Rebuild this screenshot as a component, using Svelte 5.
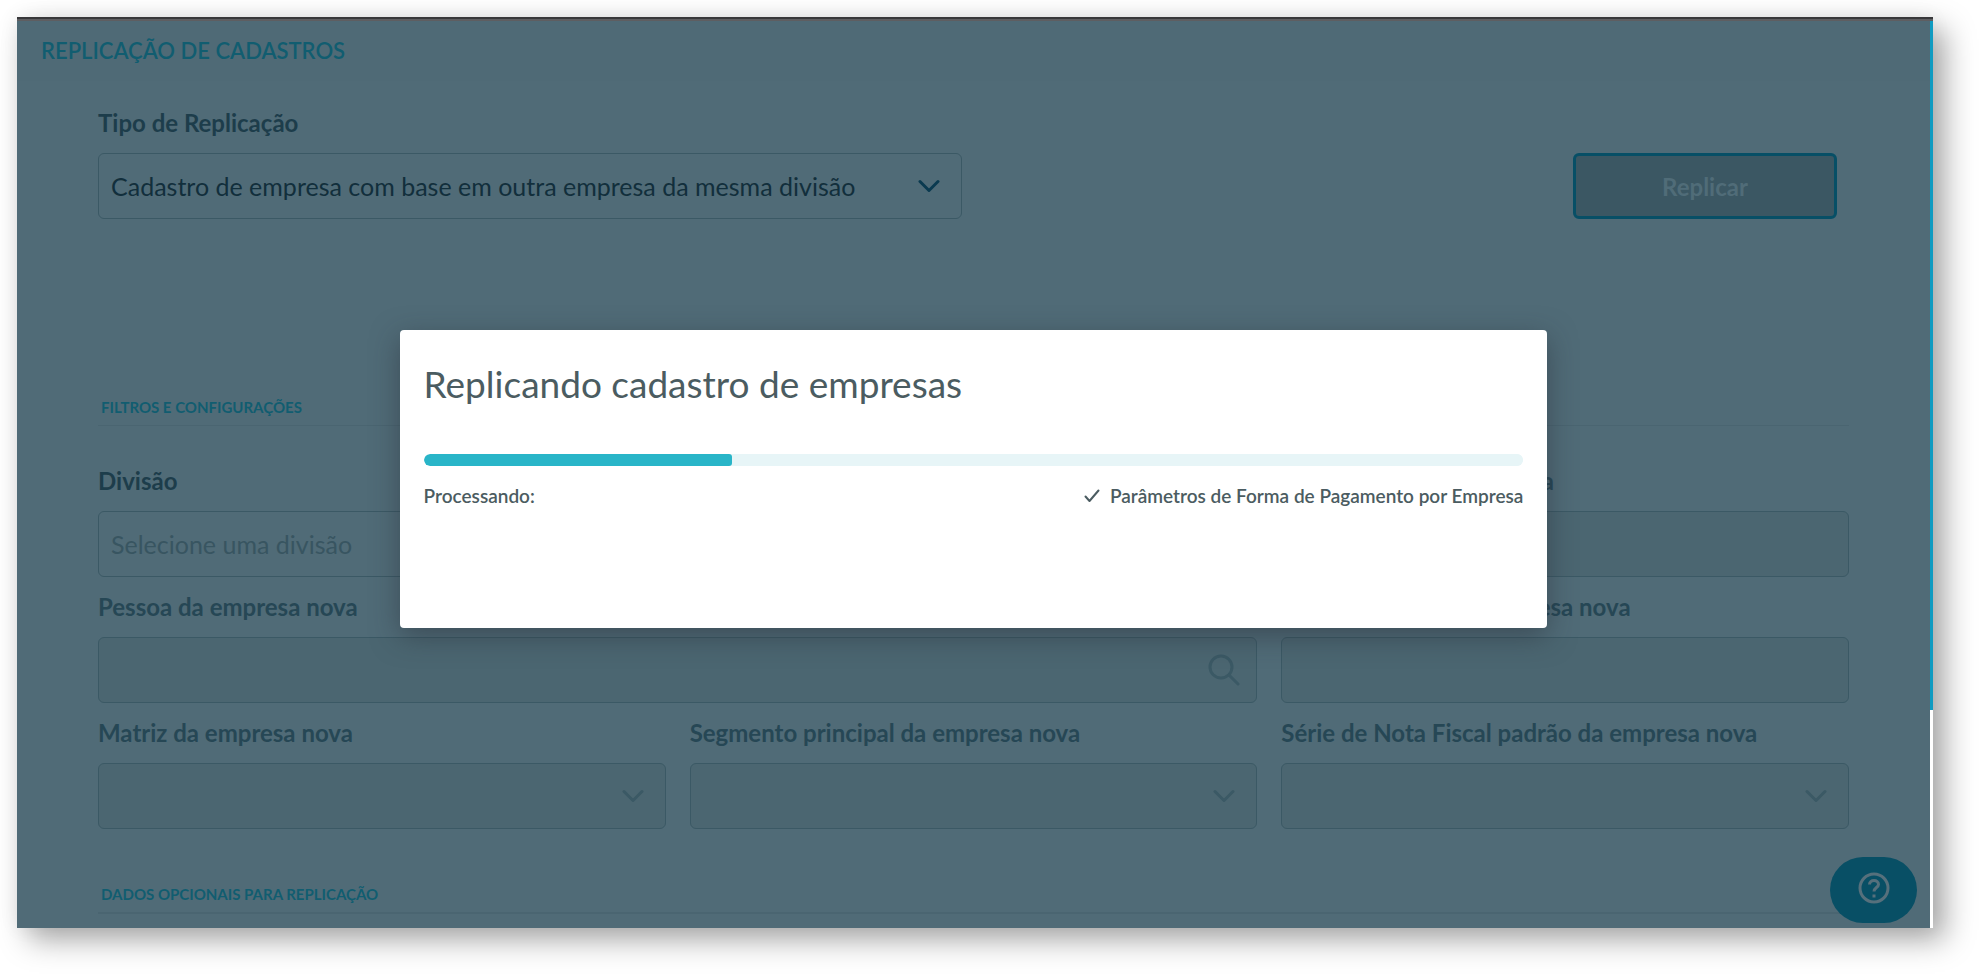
<script lang="ts">
  type Field = {
    id: string;
    label: string;
    kind: 'select' | 'search' | 'text';
    placeholder?: string;
    wide?: boolean;
    disabled?: boolean;
  };

  const fields: Field[] = [
    { id: 'divisao', label: 'Divisão', kind: 'select', placeholder: 'Selecione uma divisão', wide: true },
    { id: 'numero', label: 'Número da empresa nova', kind: 'text', disabled: true },
    { id: 'pessoa', label: 'Pessoa da empresa nova', kind: 'search', wide: true, disabled: true },
    { id: 'reduzido', label: 'Nome reduzido da empresa nova', kind: 'text', disabled: true },
    { id: 'matriz', label: 'Matriz da empresa nova', kind: 'select', disabled: true },
    { id: 'segmento', label: 'Segmento principal da empresa nova', kind: 'select', disabled: true },
    { id: 'serie', label: 'Série de Nota Fiscal padrão da empresa nova', kind: 'select', disabled: true },
  ];

  let progress = $state(28);
  let current = $state('Parâmetros de Forma de Pagamento por Empresa');
</script>

{#snippet chevron()}
  <svg class="chevron" viewBox="0 0 22 13" aria-hidden="true">
    <path d="M2 2l9 9 9-9" />
  </svg>
{/snippet}

<div class="page">
  <div class="window">
    <div class="topbar"></div>
    <div class="body">
      <main class="content">
        <header class="header">
          <h1>REPLICAÇÃO DE CADASTROS</h1>
        </header>

        <form class="form">
          <div class="type-row">
            <div class="field">
              <label for="tipo">Tipo de Replicação</label>
              <div class="control">
                <select id="tipo">
                  <option>Cadastro de empresa com base em outra empresa da mesma divisão</option>
                </select>
                {@render chevron()}
              </div>
            </div>
            <button type="button" class="replicate" disabled>Replicar</button>
          </div>

          <h2 class="section filters">FILTROS E CONFIGURAÇÕES</h2>

          <div class="grid">
            {#each fields as field (field.id)}
              <div class="field" class:wide={field.wide} class:disabled={field.disabled}>
                <label for={field.id}>{field.label}</label>
                <div class="control">
                  {#if field.kind === 'select'}
                    <select id={field.id} class="empty" disabled={field.disabled}>
                      <option>{field.placeholder ?? ''}</option>
                    </select>
                    {@render chevron()}
                  {:else}
                    <input id={field.id} type="text" disabled={field.disabled} />
                    {#if field.kind === 'search'}
                      <svg class="search" viewBox="0 0 32 32" aria-hidden="true">
                        <circle cx="13" cy="13" r="11" />
                        <path d="M21 21l9 9" />
                      </svg>
                    {/if}
                  {/if}
                </div>
              </div>
            {/each}
          </div>

          <h2 class="section optional">DADOS OPCIONAIS PARA REPLICAÇÃO</h2>
        </form>

        <button type="button" class="help" aria-label="Ajuda">
          <svg viewBox="0 0 32 32" aria-hidden="true">
            <circle cx="16" cy="16" r="14" />
            <path d="M11.500 12.500c0-2.500 2-4 4.500-4s4.500 1.500 4.500 4c0 3-4.500 3.200-4.500 7" />
            <path class="dot" d="M16 22.500v3" />
          </svg>
        </button>

        <div class="backdrop">
          <div class="dialog" role="dialog" aria-modal="true" aria-labelledby="dialog-title">
            <h2 id="dialog-title">Replicando cadastro de empresas</h2>
            <progress max="100" value={progress} aria-label="Progresso"></progress>
            <div class="status">
              <span>Processando:</span>
              <span class="step">
                <svg viewBox="0 0 16 14" aria-hidden="true">
                  <path d="M1.500 7.500l4 4.500 9-10.500" />
                </svg>
                {current}
              </span>
            </div>
          </div>
        </div>
      </main>

      <div class="scrollbar"><div class="thumb"></div></div>
    </div>
  </div>
</div>

<style>
  :global(body) {
    margin: 0;
    background: #fff;
  }

  .page {
    padding: 17px 48px 48px 17px;
    font-family: Lato, 'Noto Sans', sans-serif;
    overflow: hidden;
  }

  .page *,
  .page {
    box-sizing: border-box;
  }

  .window {
    box-shadow:
      12px 12px 28px rgba(0, 0, 0, 0.34),
      0 0 20px rgba(0, 0, 0, 0.06);
  }

  .topbar {
    height: 4px;
    background: #5e5e61;
    border-top: 2px solid #38383a;
  }

  .body {
    display: flex;
  }

  .content {
    position: relative;
    flex: 1;
    min-width: 0;
    background: #506b77;
    overflow: hidden;
  }

  .scrollbar {
    width: 3px;
    background: #fff;
  }

  .thumb {
    height: 76%;
    background: #109bc1;
  }

  .header {
    height: 60px;
    padding: 0 24px;
    display: flex;
    align-items: center;
    background: #4f6a76;
  }

  h1 {
    margin: 0;
    font-size: 22px;
    line-height: 24px;
    font-weight: 600;
    color: #115d70;
  }

  .form {
    padding: 24px 81px 14px;
  }

  .type-row {
    display: grid;
    grid-template-columns: 1fr 1fr;
    column-gap: 24px;
    align-items: end;
  }

  .grid {
    display: grid;
    grid-template-columns: repeat(3, 1fr);
    gap: 12px 24px;
  }

  .wide {
    grid-column: span 2;
  }

  .field label {
    display: block;
    margin-bottom: 12px;
    font-size: 24px;
    line-height: 36px;
    font-weight: 700;
    color: #1d3d4b;
    white-space: nowrap;
  }

  .field.disabled label {
    color: #264755;
  }

  .control {
    position: relative;
  }

  .control select,
  .control input {
    display: block;
    width: 100%;
    height: 66px;
    margin: 0;
    padding: 0 60px 0 12px;
    border: 1px solid #3b5965;
    border-radius: 6px;
    background: transparent;
    color: #122f3c;
    font-family: inherit;
    font-size: 25px;
    appearance: none;
    opacity: 1;
  }

  .control select.empty {
    color: #385561;
  }

  .control select:disabled,
  .control input:disabled {
    background: #4b6671;
  }

  .control svg {
    position: absolute;
    top: 50%;
    transform: translateY(-50%);
    fill: none;
    stroke: #0a3a50;
    stroke-width: 3;
    stroke-linecap: round;
    stroke-linejoin: round;
    pointer-events: none;
  }

  .field.disabled svg {
    stroke: #3b5965;
  }

  .chevron {
    right: 22px;
    width: 22px;
    height: 13px;
  }

  .search {
    right: 17px;
    width: 32px;
    height: 32px;
  }

  .replicate {
    justify-self: end;
    width: 264px;
    height: 66px;
    margin-right: 12px;
    border: 3px solid #074f66;
    border-radius: 6px;
    background: #3b5763;
    color: #506c78;
    font-family: inherit;
    font-size: 24px;
    font-weight: 700;
  }

  .section {
    margin: 0;
    padding: 0 3px 6px;
    font-size: 15px;
    line-height: 24px;
    font-weight: 700;
    color: #115d70;
    border-bottom: 1px solid #4a6571;
  }

  .filters {
    margin: 176px 0 37px;
  }

  .optional {
    margin-top: 53px;
    border-bottom-width: 2px;
  }

  .help {
    position: absolute;
    right: 13px;
    bottom: 5px;
    width: 87px;
    height: 66px;
    padding: 0 0 4px;
    border: 0;
    border-radius: 33px;
    background: #084f65;
    display: flex;
    align-items: center;
    justify-content: center;
  }

  .help svg {
    width: 32px;
    height: 32px;
    fill: none;
    stroke: #56707c;
    stroke-width: 3;
    stroke-linejoin: round;
  }

  .backdrop {
    position: absolute;
    inset: 0;
    padding-top: 309px;
    display: flex;
    justify-content: center;
    align-items: flex-start;
  }

  .dialog {
    width: 60%;
    min-height: 298px;
    padding: 24px;
    border-radius: 4px;
    background: #fff;
    color: #4b5c61;
    box-shadow: 0 8px 28px rgba(40, 45, 55, 0.5);
  }

  .dialog h2 {
    width: fit-content;
    margin: 6px 0 46px;
    font-size: 37px;
    line-height: 48px;
    font-weight: 400;
  }

  progress {
    display: block;
    width: 100%;
    height: 12px;
    border: 0;
    border-radius: 6px;
    background: #e7f5f7;
    overflow: hidden;
    appearance: none;
  }

  progress::-webkit-progress-bar {
    background: #e7f5f7;
    border-radius: 6px;
  }

  progress::-webkit-progress-value {
    background: #29b5c8;
    border-radius: 6px 3px 3px 6px;
  }

  .status {
    display: flex;
    justify-content: space-between;
    margin-top: 18px;
    font-size: 19px;
    line-height: 24px;
    font-weight: 600;
  }

  .step {
    display: flex;
    align-items: center;
    gap: 10px;
  }

  .step svg {
    width: 16px;
    height: 14px;
    fill: none;
    stroke: currentColor;
    stroke-width: 2;
    stroke-linecap: round;
    stroke-linejoin: round;
  }
</style>
